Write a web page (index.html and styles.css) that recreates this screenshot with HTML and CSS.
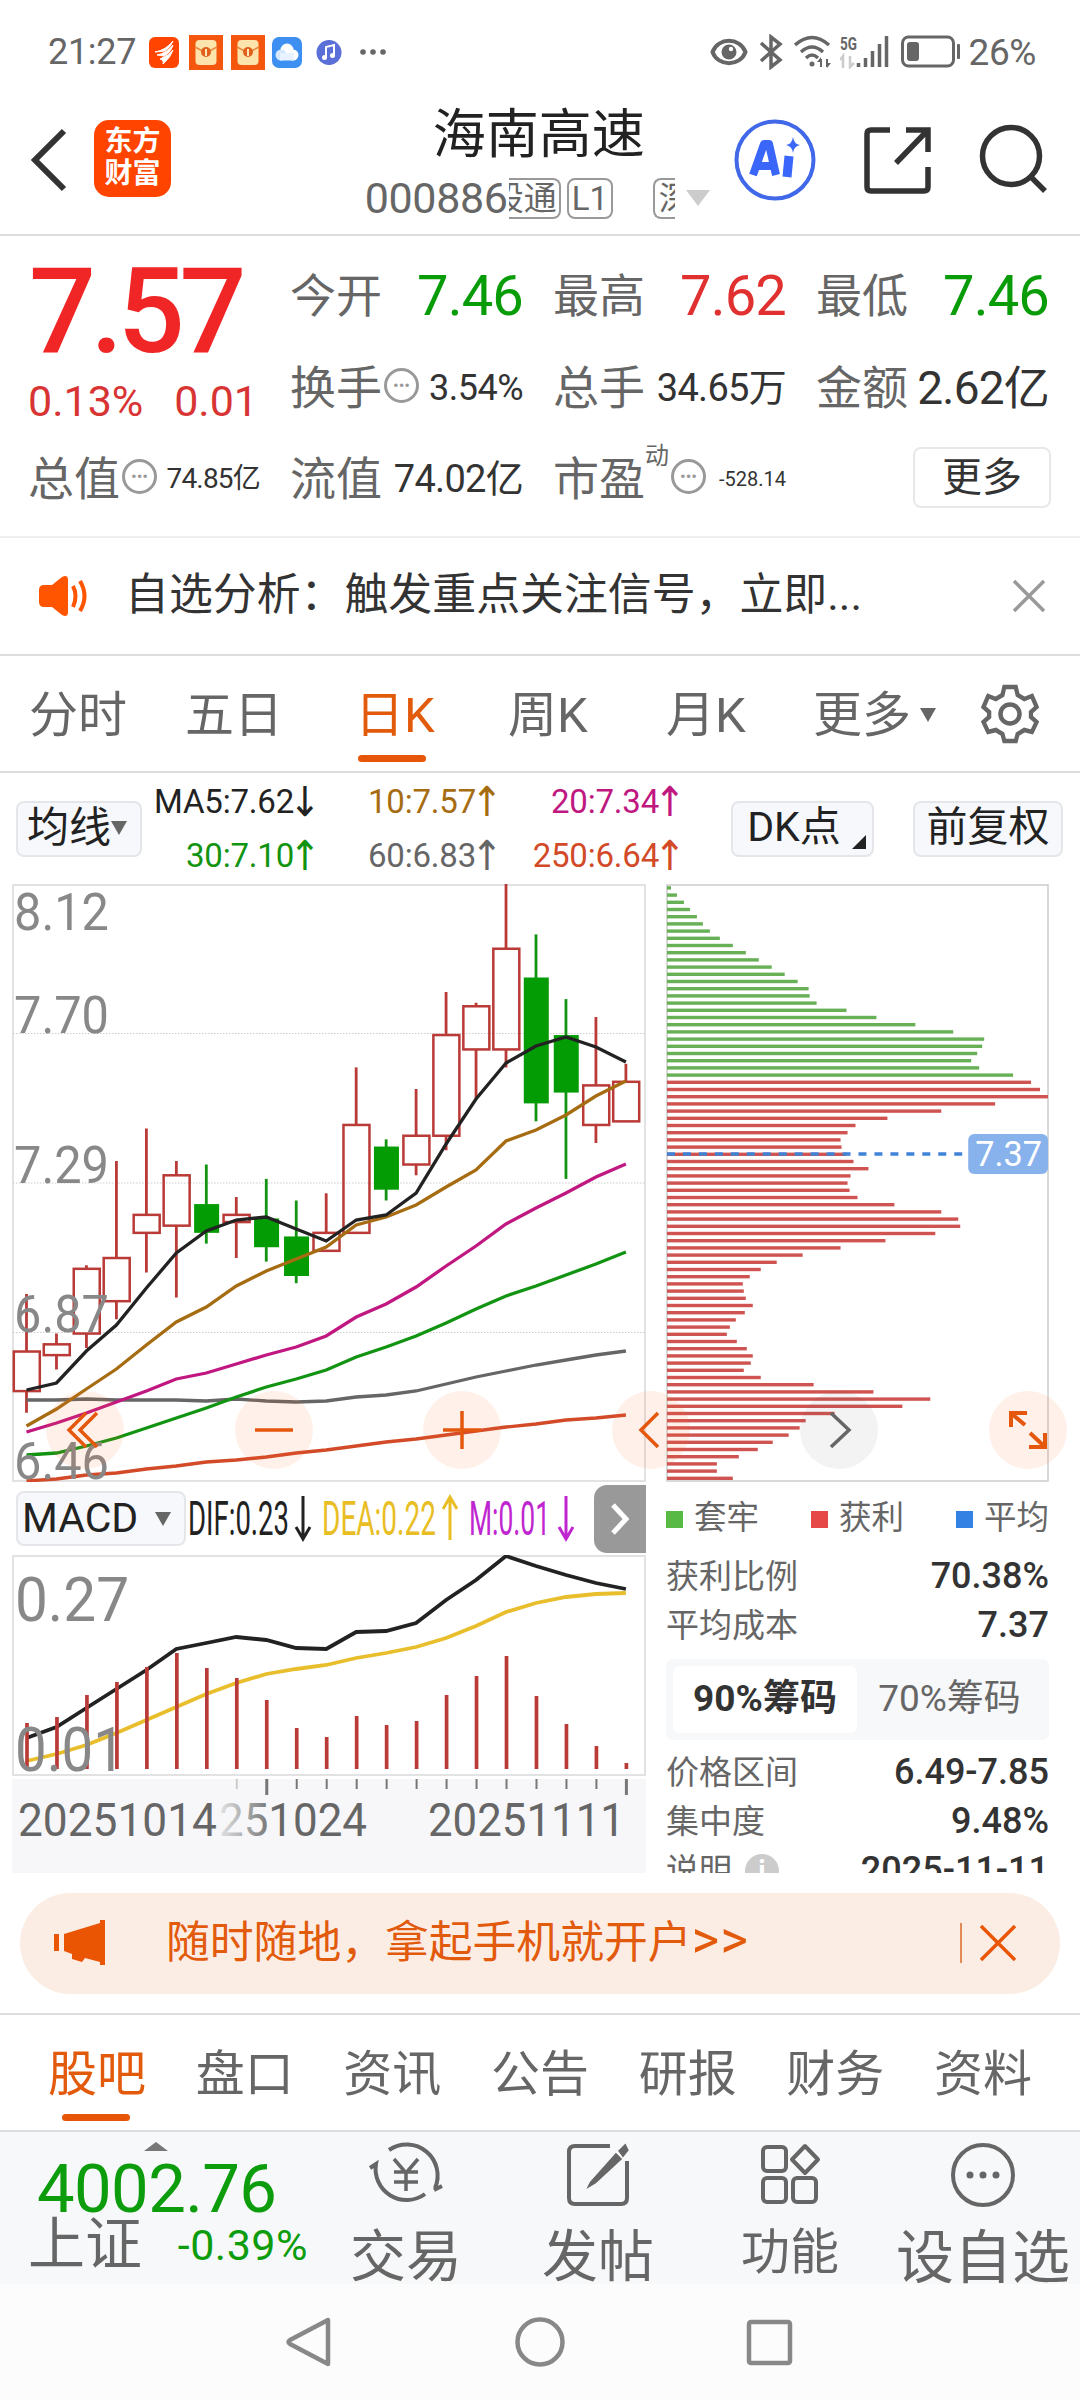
FILE: index.html
```
<!DOCTYPE html>
<html lang="zh-CN">
<head>
    <meta charset="UTF-8">
    <meta name="viewport" content="width=device-width, initial-scale=1.0">
    <title>海南高速 000886</title>
    <link rel="stylesheet" href="styles.css">
</head>
<body>
    <div class="status-bar">
        <span class="time">21:27</span>
        <div class="status-apps">
            <svg width="30" height="31" viewBox="0 0 30 31"><rect width="30" height="31" rx="6" fill="#ff4400"/><path d="M6 15Q17 13 24 4Q22 10 16 14ZM8 18Q18 16 24 8Q22 15 15 19ZM11 22Q19 19 24 13Q22 20 14 27Q15 23 11 22Z" fill="#fff" stroke="#fff"/></svg>
            <svg class="packet" width="34" height="35" viewBox="0 0 34 35"><rect width="34" height="35" fill="#f4560e"/><rect x="6.500" y="5" width="21" height="25" rx="4" fill="#fde3ac"/><path d="M6 12L17 18L28 12" fill="none" stroke="#e8893c" stroke-width="1.500"/><circle cx="17" cy="17" r="5" fill="#e0601c"/><path d="M17 14V21" stroke="#fde9b8" stroke-width="2"/></svg>
            <svg class="packet" width="34" height="35" viewBox="0 0 34 35"><rect width="34" height="35" fill="#f4560e"/><rect x="6.500" y="5" width="21" height="25" rx="4" fill="#fde3ac"/><path d="M6 12L17 18L28 12" fill="none" stroke="#e8893c" stroke-width="1.500"/><circle cx="17" cy="17" r="5" fill="#e0601c"/><path d="M17 14V21" stroke="#fde9b8" stroke-width="2"/></svg>
            <svg width="30" height="31" viewBox="0 0 30 31"><rect width="30" height="31" rx="7" fill="#3d8ff2"/><circle cx="15" cy="13" r="6.500" fill="#fff"/><circle cx="9" cy="18" r="5.500" fill="#d5e8ff"/><circle cx="21" cy="18" r="5.500" fill="#fff"/><rect x="8" y="16" width="14" height="7.500" fill="#e8f3ff"/></svg>
            <svg class="music" width="28" height="31" viewBox="0 0 28 31"><circle cx="14" cy="15.500" r="12.500" fill="#5a6fd8"/><path d="M11 20V10L19 8V18" fill="none" stroke="#fff" stroke-width="2"/><circle cx="9.500" cy="20.500" r="2.500" fill="#fff"/><circle cx="17.500" cy="18.500" r="2.500" fill="#fff"/></svg>
            <svg width="26" height="8" viewBox="0 0 26 8" fill="#666"><circle cx="3" cy="4" r="2.800"/><circle cx="13" cy="4" r="2.800"/><circle cx="23" cy="4" r="2.800"/></svg>
        </div>
        <div class="status-right">
            <svg width="38" height="28" viewBox="0 0 38 28"><path d="M2.500 14C8 -1 30 -1 35.500 14C30 29 8 29 2.500 14Z" fill="none" stroke="#666" stroke-width="4"/><circle cx="19" cy="14" r="7.500" fill="#666"/><circle cx="21" cy="11" r="2.200" fill="#fff"/></svg>
            <svg width="24" height="36" viewBox="0 0 24 36"><path d="M2 9L21 26L12 33V3L21 10L2 27" fill="none" stroke="#666" stroke-width="3.500"/></svg>
            <svg width="38" height="34" viewBox="0 0 38 34" fill="none" stroke="#666" stroke-width="3.500"><path d="M1 10Q18 -5 35 10M7 17Q18 7 29 17M12 23Q18 17 24 23"/><circle cx="18" cy="29" r="2.500" fill="#666" stroke="none"/><path d="M27 24V32M33 24V32" stroke-width="2"/><path d="M23 27L27 22V27ZM37 28L33 33V28Z" fill="#666" stroke="none"/></svg>
            <svg class="signal" width="50" height="34" viewBox="0 0 50 34"><text x="0" y="15" font-size="18" font-weight="700" fill="#666" textLength="17" lengthAdjust="spacingAndGlyphs">5G</text><path d="M3 33V21L0 25M10 21V32L14 28" fill="none" stroke="#ccc" stroke-width="2.500"/><path d="M18.500 28V32M25.500 23V32M32.500 16V32M39.500 9V32M46.500 1V32" stroke="#666" stroke-width="3.500"/></svg>
            <svg width="60" height="34" viewBox="0 0 60 34"><rect x="1.500" y="2" width="51" height="29" rx="6" fill="none" stroke="#666" stroke-width="3"/><rect x="6" y="7" width="12" height="19" rx="3" fill="#666"/><rect x="56" y="9" width="3" height="15" rx="1" fill="#666"/></svg>
            <span class="battery-text">26%</span>
        </div>
    </div>

    <header class="header">
        <svg class="back" width="38" height="66" viewBox="0 0 38 66"><path d="M35 4L6 33L35 62" fill="none" stroke="#333" stroke-width="6"/></svg>
        <div class="logo">东方<br>财富</div>
        <div class="title-box">
            <h1>海南高速</h1>
            <div class="code-line">
                <span class="code">000886</span>
                <span class="tag tag-left"><i>股通</i></span>
                <span class="tag">L1</span>
                <span class="tag tag-right"><i>深</i></span>
                <span class="arrow-down"></span>
            </div>
        </div>
        <svg class="ai" width="84" height="84" viewBox="0 0 84 84"><circle cx="42" cy="42" r="38.500" fill="none" stroke="#4068e8" stroke-width="4"/><path d="M20 57L31 26H36L43 57M25 48H39" fill="none" stroke="#3a66fa" stroke-width="8" stroke-linejoin="round"/><path d="M56 38L54 59" stroke="#3a66fa" stroke-width="9"/><path d="M60 19Q61 26 67 27Q61 28 60 35Q59 28 53 27Q59 26 60 19Z" fill="#3a66fa"/></svg>
        <svg class="share" width="70" height="70" viewBox="0 0 70 70" fill="none" stroke="#333" stroke-width="5.500"><path d="M27 5H8Q4 5 4 9V62Q4 66 8 66H61Q65 66 65 62V42M43 5H65V27M64 6L33 38"/></svg>
        <svg class="search" width="70" height="70" viewBox="0 0 70 70" fill="none" stroke="#333" stroke-width="5.500"><circle cx="33" cy="32" r="28.500"/><path d="M53 53L67 67"/></svg>
    </header>

    <section class="quote">
        <div class="price-box">
            <div class="price">7.57</div>
            <div class="change"><span>0.13%</span><span>0.01</span></div>
        </div>
        <div class="cell"><label>今开</label><b class="green">7.46</b></div>
        <div class="cell"><label>最高</label><b class="red">7.62</b></div>
        <div class="cell"><label>最低</label><b class="green">7.46</b></div>
        <div class="cell"><label>换手</label><span class="more-dot">•••</span><b class="s35">3.54%</b></div>
        <div class="cell"><label>总手</label><b class="s40">34.65万</b></div>
        <div class="cell"><label>金额</label><b class="s45">2.62亿</b></div>
        <div class="cell"><label>总值</label><span class="more-dot">•••</span><b class="s28">74.85亿</b></div>
        <div class="cell"><label>流值</label><b class="s40">74.02亿</b></div>
        <div class="cell"><label>市盈</label><sup>动</sup><span class="more-dot">•••</span><b class="s20">-528.14</b></div>
        <div class="cell"><button class="btn-more">更多</button></div>
    </section>

    <section class="notice">
        <svg width="52" height="44" viewBox="0 0 52 44"><path d="M6 11H14L24 3Q30 0 30 6V38Q30 44 24 41L14 33H6Q1 33 1 28V16Q1 11 6 11Z" fill="#ff5500"/><path d="M35 12Q40 22 35 33M42 7Q51 22 42 37" fill="none" stroke="#ff5500" stroke-width="4"/></svg>
        <p>自选分析：触发重点关注信号，立即...</p>
        <svg class="close" width="34" height="34" viewBox="0 0 34 34"><path d="M2 2L32 32M32 2L2 32" stroke="#999" stroke-width="3.500"/></svg>
    </section>

    <nav class="period-tabs">
        <span>分时</span>
        <span>五日</span>
        <span class="active">日K</span>
        <span>周K</span>
        <span>月K</span>
        <span class="with-arrow">更多<i class="tri"></i></span>
        <svg width="58" height="60" viewBox="0 0 58 60" fill="none" stroke="#666" stroke-width="4.500"><path d="M23 3H35L37 11L44 15L52 12L57 23L51 28V33L57 38L52 48L44 46L37 50L35 57H23L21 50L14 46L6 48L1 38L7 33V28L1 23L6 12L14 15L21 11Z" transform="translate(1.500 0) scale(.95 1)"/><circle cx="29" cy="30" r="9.500"/></svg>
    </nav>

    <section class="ma-bar">
        <button class="chip-btn ma-btn">均线<i class="tri"></i></button>
        <div class="ma-list">
            <span class="c-ma5">MA5:7.62<i>↓</i></span>
            <span class="c-ma10">10:7.57<i>↑</i></span>
            <span class="c-ma20">20:7.34<i>↑</i></span>
            <span class="c-ma30">30:7.10<i>↑</i></span>
            <span class="c-ma60">60:6.83<i>↑</i></span>
            <span class="c-ma250">250:6.64<i>↑</i></span>
        </div>
        <button class="chip-btn dk-btn">DK点<i class="corner"></i></button>
        <button class="chip-btn fq-btn">前复权</button>
    </section>

    <section class="charts">
        <div class="left-col">
            <svg id="kline" width="634" height="598" viewBox="0 0 634 598"></svg>
            <div class="macd-bar">
                <button class="chip-btn macd-btn">MACD<i class="tri"></i></button>
                <svg width="388" height="60" viewBox="0 0 388 60" font-size="48">
                    <text x="-1" y="46" textLength="101" lengthAdjust="spacingAndGlyphs" fill="#222">DIF:0.23</text>
                    <path d="M114 7V49M107 38L114 50L121 38" stroke="#222"/>
                    <text x="133" y="46" textLength="114" lengthAdjust="spacingAndGlyphs" fill="#e9be25">DEA:0.22</text>
                    <path d="M261 51V9M254 20L261 8L268 20" stroke="#e9be25"/>
                    <text x="280" y="46" textLength="81" lengthAdjust="spacingAndGlyphs" fill="#c026d0">M:0.01</text>
                    <path d="M377 7V49M370 38L377 50L384 38" stroke="#c026d0"/>
                </svg>
                <span class="next"><svg width="20" height="34" viewBox="0 0 20 34"><path d="M3 3L16 17L3 31" fill="none" stroke="#fff" stroke-width="5"/></svg></span>
            </div>
            <svg id="macd" width="634" height="222" viewBox="0 0 634 222"></svg>
            <svg id="dates" width="634" height="94" viewBox="0 0 634 94"></svg>
        </div>
        <div class="right-col">
            <svg id="chips" width="383" height="598" viewBox="0 0 384 598" preserveAspectRatio="none"></svg>
            <div class="legend">
                <span><i class="bg-green"></i>套牢</span>
                <span><i class="bg-red"></i>获利</span>
                <span><i class="bg-blue"></i>平均</span>
            </div>
            <div class="info-row"><span>获利比例</span><b>70.38%</b></div>
            <div class="info-row"><span>平均成本</span><b>7.37</b></div>
            <div class="switch"><span class="on">90%筹码</span><span>70%筹码</span></div>
            <div class="info-row"><span>价格区间</span><b>6.49-7.85</b></div>
            <div class="info-row"><span>集中度</span><b>9.48%</b></div>
            <div class="info-row"><span>说明<i class="info-icon">i</i></span><b>2025-11-11</b></div>
        </div>
        <div class="tools">
            <span><svg viewBox="0 0 40 40"><path d="M21 3L4 20L21 37M32 3L15 20L32 37"/></svg></span>
            <span><svg viewBox="0 0 40 40"><path d="M1 20H39"/></svg></span>
            <span><svg viewBox="0 0 40 40"><path d="M1 20H39M20 1V39"/></svg></span>
            <span><svg viewBox="0 0 40 40"><path d="M27 3L10 20L27 37"/></svg></span>
            <span class="gray"><svg viewBox="0 0 40 40"><path d="M12 3L30 20L12 37"/></svg></span>
            <span><svg viewBox="0 0 40 40"><path d="M19 3H3V17M4 4L17 15M22 23L36 36M21 37H37V23" stroke-width="4"/></svg></span>
        </div>
    </section>

    <section class="banner-wrap">
        <div class="banner">
            <svg width="52" height="46" viewBox="0 0 52 46" fill="#ea5504"><path d="M0 14H5V31H0ZM10 14L46 3V0H51V45H46V42L31 38L28 42L18 39V34L10 31Z"/></svg>
            <p>随时随地，拿起手机就开户<span>&gt;&gt;</span></p>
            <i class="line"></i>
            <svg width="36" height="36" viewBox="0 0 36 36"><path d="M1 1L35 35M35 1L1 35" stroke="#ea5504" stroke-width="3.500"/></svg>
        </div>
    </section>

    <nav class="info-tabs">
        <span class="active">股吧</span>
        <span>盘口</span>
        <span>资讯</span>
        <span>公告</span>
        <span>研报</span>
        <span>财务</span>
        <span>资料</span>
    </nav>

    <footer class="bottom-bar">
        <div class="index">
            <i class="up"></i>
            <div class="index-value">4002.76</div>
            <div class="index-name">上证<span>-0.39%</span></div>
        </div>
        <div class="action">
            <svg width="76" height="68" viewBox="0 0 76 68"><path d="M21 9A31 31 0 0 1 67 47M57 53A31 31 0 0 1 8 23L2 27M66 49L74 45" stroke-width="4"/><path d="M26 18L38 32L50 18M38 32V50M26 31H50M26 41H50" stroke-width="3.500"/></svg>
            <span>交易</span>
        </div>
        <div class="action">
            <svg width="64" height="68" viewBox="0 0 64 68"><path d="M44 5H9Q3 5 3 11V57Q3 63 9 63H55Q61 63 61 57V20"/><path d="M25 42L50 14L54 18L29 41L24 44ZM54 10L59 5L61 9L57 14Z" fill="#666" stroke-width="3"/></svg>
            <span>发帖</span>
        </div>
        <div class="action mid">
            <svg width="62" height="68" viewBox="0 0 62 68"><rect x="4" y="6" width="23" height="24" rx="4"/><rect x="4" y="37" width="23" height="24" rx="4"/><rect x="34" y="37" width="23" height="24" rx="4"/><path d="M46 5L59 18.500L46 32L33 18.500Z" stroke-linejoin="round"/></svg>
            <span>功能</span>
        </div>
        <div class="action wide">
            <svg width="68" height="68" viewBox="0 0 68 68"><circle cx="34" cy="34" r="30"/><g fill="#666" stroke="none"><circle cx="21" cy="34" r="3.500"/><circle cx="34" cy="34" r="3.500"/><circle cx="47" cy="34" r="3.500"/></g></svg>
            <span>设自选</span>
        </div>
    </footer>

    <div class="sys-nav">
        <svg viewBox="0 0 52 52"><path d="M44 4V48L6 28Q3 26 6 24Z" stroke-linejoin="round"/></svg>
        <svg viewBox="0 0 52 52"><circle cx="26" cy="26" r="22.500"/></svg>
        <svg viewBox="0 0 52 52"><rect x="5" y="6" width="41" height="41" rx="2"/></svg>
    </div>

    <script src="script.js"></script>
</body>
</html>
```
FILE: styles.css
```
* {
    box-sizing: border-box;
}
body {
    margin: 0;
    width: 1080px;
    background: #fff;
    color: #333;
    font-family: Roboto, "Noto Sans CJK SC", sans-serif;
    line-height: 1;
}
i, b, h1 {
    font-style: normal;
    font-weight: 400;
}
svg {
    display: block;
    flex-shrink: 0;
}
button {
    font-family: inherit;
    line-height: 1;
    padding: 0;
}
.green { color: #099c09; }
.red { color: #e03030; }
.tri {
    display: inline-block;
    border: 8px solid transparent;
    border-top: 14px solid #666;
    border-bottom: 0;
}

/* status bar */
.status-bar {
    height: 104px;
    padding: 0 44px 0 48px;
    display: flex;
    align-items: center;
    color: #666;
    font-size: 36px;
}
.time {
    width: 101px;
    letter-spacing: -0.3px;
}
.status-apps {
    display: flex;
    align-items: center;
    gap: 9px;
}
.status-apps .packet {
    margin-left: 1px;
    margin-right: -2px;
}
.status-apps .music {
    margin: 0 8px 0 4px;
}
.status-right {
    margin-left: auto;
    display: flex;
    align-items: center;
    gap: 11px;
}
.status-right .signal {
    margin-left: -3px;
}
.battery-text {
    margin-left: -3px;
    font-size: 37px;
    letter-spacing: -0.4px;
}

/* header */
.header {
    height: 132px;
    border-bottom: 2px solid #ddd;
    display: flex;
    align-items: center;
    padding: 0 32px 18px 29px;
}
.logo {
    margin: -3px 0 0 27px;
    width: 77px;
    height: 77px;
    border-radius: 15px;
    background: #ff4400;
    color: #fff;
    font-size: 28px;
    line-height: 32px;
    font-weight: 700;
    text-align: center;
    padding-top: 6px;
}
.title-box {
    margin-left: 194px;
    width: 368px;
    height: 120px;
    margin-top: 16px;
}
.title-box h1 {
    margin: 0 0 0 68px;
    font-size: 53px;
    line-height: 54px;
    color: #222;
}
.code-line {
    display: flex;
    align-items: center;
    margin-top: 13px;
    height: 46px;
}
.code {
    width: 144px;
    font-size: 43px;
    letter-spacing: -0.4px;
    color: #666;
}
.tag {
    height: 41px;
    width: 46px;
    border: 2px solid #999;
    border-radius: 8px;
    font-size: 33px;
    line-height: 37px;
    text-align: center;
    color: #666;
    overflow: hidden;
}
.tag-left {
    width: 52px;
    margin-right: 6px;
    border-left: 0;
    border-radius: 0 8px 8px 0;
}
.tag-left i {
    display: block;
    width: 66px;
    margin-left: -18px;
}
.tag-right {
    width: 22px;
    margin-left: 40px;
    border-right: 0;
    border-radius: 8px 0 0 8px;
    text-align: left;
}
.tag-right i {
    padding-left: 4px;
}
.arrow-down {
    margin-left: 11px;
    border: 12px solid transparent;
    border-top: 16px solid #ccc;
    border-bottom: 0;
}
.ai {
    margin: 0 0 0 1px;
}
.share {
    margin: 0 0 0 46px;
}
.search {
    margin: -2px 0 0 45px;
}

/* quote */
.quote {
    height: 302px;
    padding: 14px 30px 0 28px;
    border-bottom: 2px solid #eee;
    display: grid;
    grid-template-columns: 232px repeat(3, 233px);
    grid-template-rows: 92px 92px 90px;
    column-gap: 30px;
}
.price-box {
    grid-row: span 2;
    color: #f02626;
}
.price {
    font-size: 118px;
    font-weight: 500;
    line-height: 120px;
    letter-spacing: -5.5px;
    padding: 2px 0 0 1px;
}
.change {
    font-size: 43px;
    color: #d83434;
    display: flex;
    justify-content: space-between;
    padding: 4px 2px 0 0;
    letter-spacing: 0;
    line-height: 50px;
}
.cell {
    display: flex;
    align-items: center;
    white-space: nowrap;
}
.cell label {
    font-size: 46px;
    color: #666;
}
.cell b {
    margin-left: auto;
    font-size: 56px;
    letter-spacing: -0.8px;
}
.cell b.s45 { font-size: 46px; }
.cell b.s40 { font-size: 38px; letter-spacing: -0.7px; }
.cell b.s35 { font-size: 36px; letter-spacing: -0.5px; }
.cell b.s28 { font-size: 28px; letter-spacing: -0.8px; }
.cell b.s20 { font-size: 20px; letter-spacing: 0; }
.cell sup {
    font-size: 24px;
    color: #666;
    align-self: flex-start;
    margin-top: 10px;
}
.more-dot {
    width: 35px;
    height: 35px;
    margin: -5px 0 0 2px;
    border: 3px solid #999;
    border-radius: 50%;
    color: #999;
    font-size: 17px;
    line-height: 28px;
    text-align: center;
    letter-spacing: 0;
}
.btn-more {
    width: 138px;
    height: 61px;
    margin: -3px 0 0 97px;
    flex-shrink: 0;
    border: 2px solid #e8e8e8;
    border-radius: 8px;
    background: #fff;
    color: #333;
    font-size: 40px;
}

/* notice */
.notice {
    height: 118px;
    border-bottom: 2px solid #ddd;
    display: flex;
    align-items: center;
    padding: 0 34px 0 38px;
}
.notice p {
    margin: 0 auto 0 35px;
    font-size: 43.9px;
}

/* period tabs */
.period-tabs {
    height: 117px;
    border-bottom: 2px solid #ddd;
    display: grid;
    grid-template-columns: 156px 170px 153px 158px 147px 168px 58px;
    align-items: center;
    padding: 0 0 0 29px;
    color: #666;
    font-size: 49px;
}
.period-tabs span {
    position: relative;
    justify-self: start;
    padding-top: 3px;
}
.period-tabs .with-arrow {
    display: flex;
    align-items: center;
    gap: 9px;
}
.period-tabs .active, .info-tabs .active {
    color: #e25a0c;
}
.period-tabs .active::after, .info-tabs .active::after {
    content: "";
    position: absolute;
    left: 50%;
    bottom: -22px;
    width: 68px;
    height: 7px;
    margin-left: -37px;
    border-radius: 4px;
    background: #e65508;
}
.info-tabs .active::after {
    margin-left: -35px;
}

/* moving averages */
.chip-btn {
    height: 56px;
    border: 2px solid #e4e6ea;
    border-radius: 8px;
    background: #f7f8fb;
    color: #222;
    font-size: 41px;
    white-space: nowrap;
    position: relative;
}
.ma-bar {
    height: 111px;
    display: flex;
    align-items: center;
    padding: 0 16px;
}
.ma-btn {
    width: 126px;
    padding: 0 4px 2px 0;
    font-size: 42px;
    display: flex;
    align-items: center;
    justify-content: center;
}
.ma-list {
    display: grid;
    grid-template-columns: 178px 182px 183px;
    grid-template-rows: 54px 54px;
    align-items: center;
    justify-items: end;
    font-size: 33px;
    line-height: 54px;
    letter-spacing: -0.2px;
}
.ma-list i {
    display: inline-block;
    width: 26px;
    font-family: "Noto Sans", "DejaVu Sans", sans-serif;
    line-height: 40px;
    text-align: center;
    text-indent: -4px;
    transform: scale(1.15, 1.25);
}
.c-ma5 { color: #222; }
.c-ma10 { color: #a66c12; }
.c-ma20 { color: #c01880; }
.c-ma30 { color: #129412; }
.c-ma60 { color: #666; }
.c-ma250 { color: #d24a28; }
.dk-btn {
    width: 143px;
    margin-left: 46px;
    padding: 0 17px 2px 0;
}
.dk-btn .corner {
    position: absolute;
    right: 6px;
    bottom: 6px;
    border: 7px solid #222;
    border-top-color: transparent;
    border-left-color: transparent;
}
.fq-btn {
    width: 150px;
    margin-left: 39px;
    padding-bottom: 2px;
}

/* charts */
.charts {
    height: 989px;
    display: grid;
    grid-template-columns: 634px 383px;
    column-gap: 20px;
    padding-left: 12px;
    position: relative;
}
.left-col, .right-col {
    height: 989px;
    overflow: hidden;
}
.macd-bar {
    height: 73px;
    display: flex;
    align-items: center;
    padding-left: 4px;
    overflow: hidden;
}
.macd-btn {
    width: 170px;
    height: 55px;
    margin-right: 3px;
    display: flex;
    align-items: center;
    gap: 17px;
    padding-left: 4px;
}
.macd-bar > svg {
    overflow: visible;
}
.macd-bar > svg path {
    fill: none;
    stroke-width: 3;
}
.next {
    width: 52px;
    height: 68px;
    margin-left: 17px;
    background: #999;
    border-radius: 13px 0 0 13px;
    display: flex;
    align-items: center;
    justify-content: center;
    flex-shrink: 0;
}
#dates {
    margin-top: 2px;
    background: #f7f7fa;
}
.legend {
    display: flex;
    justify-content: space-between;
    height: 73px;
    align-items: center;
    font-size: 32.5px;
    color: #666;
}
.legend span {
    display: flex;
    align-items: center;
    gap: 11px;
}
.legend i {
    width: 17px;
    height: 17px;
    margin-top: 2px;
}
.bg-green { background: #58b944; }
.bg-red { background: #e64848; }
.bg-blue { background: #3381e3; }
.info-row {
    height: 49px;
    display: flex;
    align-items: center;
    justify-content: space-between;
    font-size: 33px;
    color: #666;
}
.legend + .info-row {
    margin-top: -3px;
}
.info-row span {
    display: flex;
    align-items: center;
}
.info-row b {
    font-size: 36px;
    font-weight: 500;
    color: #333;
    padding-bottom: 2px;
}
.info-icon {
    width: 34px;
    height: 34px;
    margin-left: 13px;
    border-radius: 50%;
    background: #ccc;
    color: #fff;
    font-size: 28px;
    font-weight: 700;
    line-height: 34px;
    text-align: center;
}
.switch {
    height: 81px;
    margin: 9px 0 8px;
    padding: 7px;
    border-radius: 7px;
    background: #f7f8fa;
    display: grid;
    grid-template-columns: 184px 1fr;
    font-size: 37px;
    line-height: 66px;
    text-align: center;
    color: #666;
}
.switch .on {
    background: #fff;
    border-radius: 7px;
    color: #333;
    font-weight: 700;
}
.tools {
    position: absolute;
    left: 46px;
    top: 507px;
    width: 1021px;
    display: flex;
    justify-content: space-between;
}
.tools span {
    width: 78px;
    height: 78px;
    border-radius: 50%;
    background: rgba(255, 110, 40, 0.1);
    display: flex;
    align-items: center;
    justify-content: center;
}
.tools .gray {
    background: rgba(80, 80, 80, 0.07);
}
.tools svg {
    width: 40px;
    height: 40px;
    fill: none;
    stroke: #e4570c;
    stroke-width: 3.5;
}
.tools .gray svg {
    stroke: #666;
}

/* banner */
.banner-wrap {
    height: 142px;
    padding: 20px 20px 0;
    border-bottom: 2px solid #ddd;
}
.banner {
    height: 101px;
    border-radius: 51px;
    background: #fcede4;
    color: #e25a0c;
    font-size: 43.8px;
    display: flex;
    align-items: center;
    padding: 0 44px 2px 34px;
}
.banner p {
    margin: 1px auto 0 60px;
    line-height: 60px;
}
.banner p span {
    font-size: 53px;
    line-height: 50px;
    letter-spacing: 1px;
}
.banner .line {
    width: 2px;
    height: 40px;
    margin-right: 18px;
    background: #e48a54;
}

/* info tabs */
.info-tabs {
    height: 117px;
    border-bottom: 2px solid #ddd;
    display: flex;
    align-items: center;
    justify-content: space-between;
    padding: 3px 48px 0 48px;
    color: #666;
    font-size: 49px;
}
.info-tabs span {
    position: relative;
}

/* bottom bar */
.bottom-bar {
    height: 152px;
    background: #f7f8fa;
    display: grid;
    grid-template-columns: 310px 192px 192px 192px 194px;
    color: #666;
    overflow: hidden;
}
.index {
    padding-left: 28px;
    position: relative;
}
.index .up {
    position: absolute;
    left: 144px;
    top: 10px;
    border: 12px solid transparent;
    border-bottom: 9px solid #777;
    border-top: 0;
}
.index-value {
    margin: 24px 0 0 9px;
    font-size: 67px;
    line-height: 66px;
    letter-spacing: -0.6px;
    color: #0c9c0c;
}
.index-name {
    font-size: 57px;
    line-height: 46px;
    display: flex;
    align-items: center;
    justify-content: space-between;
    padding-right: 2px;
}
.index-name span {
    font-size: 43px;
    color: #0c9c0c;
    letter-spacing: 0.5px;
}
.action {
    display: flex;
    flex-direction: column;
    align-items: center;
    padding-top: 9px;
    font-size: 56px;
    white-space: nowrap;
}
.action svg {
    fill: none;
    stroke: #666;
    stroke-width: 4;
}
.action span {
    margin-top: 20px;
}
.action.mid {
    font-size: 49px;
}
.action.mid span {
    margin-top: 19px;
}
.action.wide {
    font-size: 58px;
}

/* system navigation */
.sys-nav {
    height: 116px;
    background: #fcfcfc;
    display: flex;
    justify-content: center;
    gap: 178px;
    padding-top: 32px;
}
.sys-nav svg {
    width: 52px;
    height: 52px;
    fill: none;
    stroke: #888;
    stroke-width: 4.5;
}
```
FILE: script.js
```
// open, high, low, close
const days = [
    [6.71, 6.98, 6.65, 6.82], [6.81, 6.87, 6.77, 6.84], [6.87, 7.06, 6.83, 7.05],
    [6.96, 7.35, 6.91, 7.08], [7.15, 7.44, 7.04, 7.20], [7.17, 7.35, 6.97, 7.31],
    [7.23, 7.34, 7.12, 7.15], [7.18, 7.25, 7.08, 7.20], [7.19, 7.30, 7.07, 7.11],
    [7.14, 7.24, 7.01, 7.03], [7.10, 7.26, 7.10, 7.15], [7.15, 7.61, 7.15, 7.45],
    [7.39, 7.41, 7.24, 7.27], [7.34, 7.55, 7.31, 7.42], [7.42, 7.82, 7.38, 7.70],
    [7.66, 7.79, 7.52, 7.78], [7.66, 8.12, 7.61, 7.94], [7.86, 7.98, 7.46, 7.51],
    [7.70, 7.80, 7.30, 7.54], [7.45, 7.75, 7.40, 7.56], [7.46, 7.62, 7.46, 7.57]
];
const averages = {
    '#666': [516, 516, 515, 516, 516, 516, 517, 515, 517, 518, 517, 513, 511, 507, 500, 493, 487, 481, 476, 471, 467],
    '#d24a28': [597, 595, 591, 589, 585, 582, 578, 576, 573, 569, 566, 562, 558, 555, 551, 547, 543, 540, 536, 534, 531],
    '#129412': [571, 569, 562, 554, 544, 534, 524, 513, 503, 495, 486, 473, 463, 452, 439, 425, 412, 402, 391, 380, 368],
    '#c01880': [548, 539, 529, 518, 507, 495, 489, 480, 471, 463, 452, 433, 420, 403, 382, 362, 340, 324, 309, 293, 280],
    '#a66c12': [542, 525, 505, 485, 461, 438, 423, 402, 387, 375, 363, 341, 333, 321, 303, 286, 257, 246, 231, 212, 197],
    '#222': [506, 499, 467, 441, 404, 369, 347, 336, 333, 345, 357, 336, 331, 309, 260, 215, 179, 162, 153, 163, 178]
};
const dif = [182, 171, 152, 133, 114, 93, 87, 81, 84, 92, 93, 76, 75, 67, 44, 24, 0, 10, 19, 27, 33];
const dea = [205, 198, 189, 177, 164, 151, 138, 127, 118, 113, 109, 102, 97, 91, 82, 70, 56, 47, 41, 38, 37];
const macdBars = [167, 161, 139, 126, 111, 97, 112, 122, 144, 172, 181, 160, 169, 165, 139, 120, 100, 140, 168, 190, 207];
const trapped = [4, 10, 17, 23, 30, 36, 43, 53, 66, 79, 92, 105, 118, 131, 142, 143, 150, 180, 210, 249, 287, 318, 316, 311, 305, 313, 347];
const profit = [365, 374, 382, 329, 275, 221, 189, 181, 174, 175, 180, 187, 202, 184, 181, 183, 191, 228, 275, 292,
    294, 269, 219, 174, 136, 110, 94, 83, 76, 77, 79, 86, 78, 69, 63, 60, 70, 80, 86, 84,
    77, 94, 147, 207, 264, 236, 168, 139, 133, 122, 106, 91, 72, 50, 50, 66];

const x = i => 14.5 + i * 29.97;
const y = p => (8.12 - p) / 1.66 * 597;

function polyline(values, color, width) {
    const pts = values.map((v, i) => `${x(i).toFixed(1)},${v}`).join(' ');
    return `<polyline points="${pts}" fill="none" stroke="${color}" stroke-width="${width}"/>`;
}

function label(text, px, py, size, width, color) {
    return `<text x="${px}" y="${py}" font-size="${size}" fill="${color}" textLength="${width}" lengthAdjust="spacingAndGlyphs">${text}</text>`;
}

function drawKline() {
    let s = '<rect x="1" y="1" width="632" height="596" fill="none" stroke="#e2e2e2" stroke-width="2"/>';
    [149.5, 299, 448.5].forEach(g => {
        s += `<path d="M1 ${g}H633" stroke="#ccc" stroke-dasharray="1.500 1.500"/>`;
    });
    days.forEach(([o, h, l, c], i) => {
        const top = y(Math.max(o, c)), bottom = y(Math.min(o, c));
        if (c >= o) {
            s += `<path d="M${x(i)} ${y(h)}V${top}M${x(i)} ${bottom}V${y(l)}" stroke="#b93a36" stroke-width="2.800"/>`;
            s += `<rect x="${x(i) - 12.7}" y="${top}" width="26" height="${bottom - top}" fill="none" stroke="#b93a36" stroke-width="2.500"/>`;
        } else {
            s += `<path d="M${x(i)} ${y(h)}V${y(l)}" stroke="#129412" stroke-width="2.800"/>`;
            s += `<rect x="${x(i) - 12.2}" y="${top}" width="25" height="${bottom - top}" fill="#049c04"/>`;
        }
    });
    for (const color in averages) {
        s += polyline(averages[color], color, 3.3);
    }
    [['8.12', 46], ['7.70', 149], ['7.29', 299], ['6.87', 448], ['6.46', 595]].forEach(([t, py]) => {
        s += label(t, 2, py, 51, 95, '#888');
    });
    document.getElementById('kline').innerHTML = s;
}

function drawMacd() {
    let s = '<rect x="1" y="1" width="632" height="219" fill="none" stroke="#e2e2e2" stroke-width="2"/>';
    s += polyline(dif.map(v => v + 1), '#222', 3.8) + polyline(dea.map(v => v + 1), '#e9be2c', 3.8);
    macdBars.forEach((v, i) => {
        s += `<path d="M${x(i) + .5} ${v + 1}V214" stroke="#b93a36" stroke-width="3.700"/>`;
    });
    s += label('0.27', 3, 66, 62, 114, '#888') + label('0.01', 3, 216, 62, 110, '#888');
    document.getElementById('macd').innerHTML = s;
}

function drawDates() {
    let s = '<defs><linearGradient id="fade" gradientUnits="userSpaceOnUse" x1="205" x2="265"><stop offset="0" stop-color="#e8e8e8"/><stop offset="1" stop-color="#666"/></linearGradient></defs>';
    for (let i = 7; i <= 20; i++) {
        const main = i === 8 || i === 20;
        s += `<path d="M${x(i) + .5} 0V${main ? 16 : 10}" stroke="${i === 7 ? '#ccc' : '#777'}" stroke-width="${main ? 3 : 2}"/>`;
    }
    s += label('251024', 207, 57, 46, 148, 'url(#fade)');
    s += label('20251014', 6, 57, 46, 199, '#666') + label('20251111', 416, 57, 46, 197, '#666');
    document.getElementById('dates').innerHTML = s;
}

function drawChips() {
    let s = '<rect x="1" y="1" width="382" height="596" fill="none" stroke="#ccc" stroke-width="1.500"/>';
    trapped.concat(profit).forEach((w, i) => {
        s += `<rect x="1" y="${2.2 + i * 7.2}" width="${w}" height="3.400" fill="${i < trapped.length ? '#67b055' : '#cf5350'}"/>`;
    });
    s += '<path d="M1 270H298" stroke="#3f82d8" stroke-width="3.500" stroke-dasharray="8 8"/>';
    s += '<rect x="303" y="250" width="80" height="40" rx="6" fill="#87b2ec"/>';
    s += label('7.37', 310, 282, 35, 67, '#fff');
    document.getElementById('chips').innerHTML = s;
}

drawKline();
drawMacd();
drawDates();
drawChips();
```
